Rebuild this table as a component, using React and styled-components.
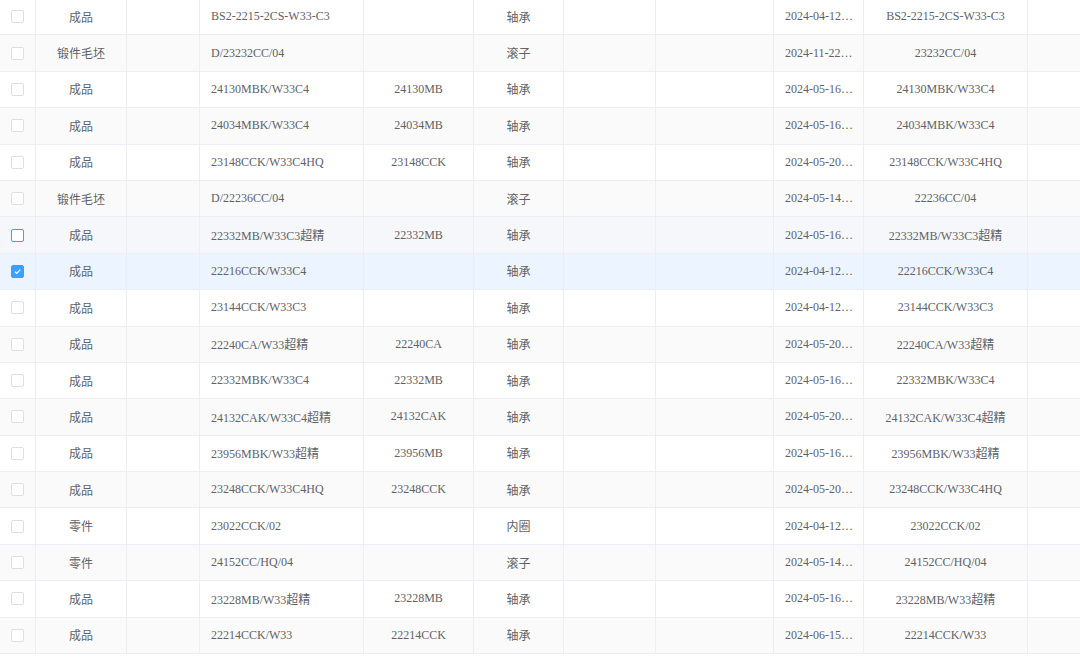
import React from 'react';
import styled, { createGlobalStyle } from 'styled-components';

const GlobalStyle = createGlobalStyle`
  html, body {
    margin: 0;
    padding: 0;
    background: #ffffff;
    overflow: hidden;
  }
`;

const Table = styled.div`
  width: 1080px;
  margin-top: -1px;
  font-family: "Liberation Serif", "Noto Sans CJK SC", serif;
  font-size: 12px;
  color: #606266;
`;

const Row = styled.div`
  display: grid;
  grid-template-columns: 36px 91px 73px 164px 110px 90px 92px 118px 90px 164px 1fr;
  height: 36.4px;
  box-sizing: border-box;
  border-bottom: 1px solid #ebeef5;
  background: ${({ $state }) =>
    $state === 'selected' ? '#ecf5ff' : $state === 'hover' ? '#f5f7fa' : $state === 'striped' ? '#fafafa' : '#ffffff'};
`;

const Cell = styled.div`
  display: flex;
  align-items: center;
  justify-content: ${({ $align }) => ($align === 'left' ? 'flex-start' : 'center')};
  padding: 0 ${({ $pad }) => $pad || 11}px;
  border-right: 1px solid #ebeef5;
  overflow: hidden;
  white-space: nowrap;
  text-overflow: ellipsis;
  min-width: 0;

  &:last-child {
    border-right: none;
  }
`;

const Box = styled.span`
  display: inline-flex;
  align-items: center;
  justify-content: center;
  width: 13px;
  height: 13px;
  box-sizing: border-box;
  border-radius: 2px;
  border: 1px solid ${({ $checked, $hover }) => ($checked || $hover ? '#409eff' : '#dcdfe6')};
  background: ${({ $checked }) => ($checked ? '#409eff' : '#ffffff')};
`;

const Checkbox = ({ checked, hover }) => (
  <Box $checked={checked} $hover={hover}>
    {checked && (
      <svg width="9" height="9" viewBox="0 0 9 9">
        <path d="M1.8 4.6 L3.7 6.4 L7.3 2.6" fill="none" stroke="#ffffff" strokeWidth="1.2" />
      </svg>
    )}
  </Box>
);

const rows = [
  ['成品', 'BS2-2215-2CS-W33-C3', '', '轴承', '2024-04-12…', 'BS2-2215-2CS-W33-C3'],
  ['锻件毛坯', 'D/23232CC/04', '', '滚子', '2024-11-22…', '23232CC/04'],
  ['成品', '24130MBK/W33C4', '24130MB', '轴承', '2024-05-16…', '24130MBK/W33C4'],
  ['成品', '24034MBK/W33C4', '24034MB', '轴承', '2024-05-16…', '24034MBK/W33C4'],
  ['成品', '23148CCK/W33C4HQ', '23148CCK', '轴承', '2024-05-20…', '23148CCK/W33C4HQ'],
  ['锻件毛坯', 'D/22236CC/04', '', '滚子', '2024-05-14…', '22236CC/04'],
  ['成品', '22332MB/W33C3超精', '22332MB', '轴承', '2024-05-16…', '22332MB/W33C3超精'],
  ['成品', '22216CCK/W33C4', '', '轴承', '2024-04-12…', '22216CCK/W33C4'],
  ['成品', '23144CCK/W33C3', '', '轴承', '2024-04-12…', '23144CCK/W33C3'],
  ['成品', '22240CA/W33超精', '22240CA', '轴承', '2024-05-20…', '22240CA/W33超精'],
  ['成品', '22332MBK/W33C4', '22332MB', '轴承', '2024-05-16…', '22332MBK/W33C4'],
  ['成品', '24132CAK/W33C4超精', '24132CAK', '轴承', '2024-05-20…', '24132CAK/W33C4超精'],
  ['成品', '23956MBK/W33超精', '23956MB', '轴承', '2024-05-16…', '23956MBK/W33超精'],
  ['成品', '23248CCK/W33C4HQ', '23248CCK', '轴承', '2024-05-20…', '23248CCK/W33C4HQ'],
  ['零件', '23022CCK/02', '', '内圈', '2024-04-12…', '23022CCK/02'],
  ['零件', '24152CC/HQ/04', '', '滚子', '2024-05-14…', '24152CC/HQ/04'],
  ['成品', '23228MB/W33超精', '23228MB', '轴承', '2024-05-16…', '23228MB/W33超精'],
  ['成品', '22214CCK/W33', '22214CCK', '轴承', '2024-06-15…', '22214CCK/W33'],
];

const HOVER = 6;
const SELECTED = 7;

const App = () => (
  <>
    <GlobalStyle />
    <Table>
      {rows.map(([type, code, short, category, date, name], i) => {
        let state = i % 2 === 1 ? 'striped' : 'plain';
        if (i === HOVER) state = 'hover';
        if (i === SELECTED) state = 'selected';
        return (
          <Row key={i} $state={state}>
            <Cell>
              <Checkbox checked={i === SELECTED} hover={i === HOVER} />
            </Cell>
            <Cell>{type}</Cell>
            <Cell />
            <Cell $align="left">{code}</Cell>
            <Cell>{short}</Cell>
            <Cell>{category}</Cell>
            <Cell />
            <Cell />
            <Cell $align="left">{date}</Cell>
            <Cell>{name}</Cell>
            <Cell />
          </Row>
        );
      })}
    </Table>
  </>
);

export default App;
